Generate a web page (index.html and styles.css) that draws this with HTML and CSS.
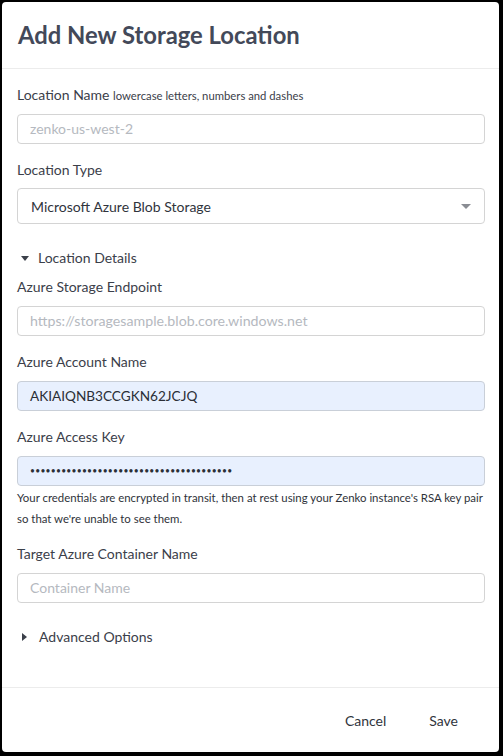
FILE: index.html
```html
<!DOCTYPE html>
<html>
<head>
<meta charset="utf-8">
<link rel="stylesheet" href="styles.css">
</head>
<body>
<div class="dialog">
  <div class="header"><h1 class="title">Add New Storage Location</h1></div>
  <div class="body">
    <div class="field">
      <label class="label">Location Name <span class="hint">lowercase letters, numbers and dashes</span></label>
      <div class="input placeholder">zenko-us-west-2</div>
    </div>
    <div class="field">
      <label class="label">Location Type</label>
      <div class="select"><span>Microsoft Azure Blob Storage</span><span class="caret"></span></div>
    </div>
    <div class="toggle open"><span class="tri-down"></span>Location Details</div>
    <div class="field lower tight">
      <label class="label">Azure Storage Endpoint</label>
      <div class="input placeholder wide">https://storagesample.blob.core.windows.net</div>
    </div>
    <div class="field lower">
      <label class="label">Azure Account Name</label>
      <div class="input filled">AKIAIQNB3CCGKN62JCJQ</div>
    </div>
    <div class="field lower">
      <label class="label">Azure Access Key</label>
      <div class="input filled dots">•••••••••••••••••••••••••••••••••••••••</div>
      <p class="help">Your credentials are encrypted in transit, then at rest using your Zenko instance's RSA key pair so that we're unable to see them.</p>
    </div>
    <div class="field lower">
      <label class="label">Target Azure Container Name</label>
      <div class="input placeholder">Container Name</div>
    </div>
    <div class="toggle closed"><span class="tri-right"></span>Advanced Options</div>
  </div>
  <div class="footer">
    <button class="btn">Cancel</button>
    <button class="btn">Save</button>
  </div>
</div>
</body>
</html>
```
FILE: styles.css
```css
html, body {
  margin: 0;
  padding: 0;
  background: #000;
  width: 503px;
  height: 756px;
  overflow: hidden;
}
body {
  padding: 2px 4px 4px 2px;
  box-sizing: border-box;
  font-family: Lato, "Noto Sans", sans-serif;
  color: #3b404a;
}
.dialog {
  background: #fff;
  border-radius: 4px;
  height: 750px;
  display: flex;
  flex-direction: column;
}
.header {
  height: 67px;
  border-bottom: 1px solid #ececec;
  box-sizing: border-box;
  padding: 0 16px;
  display: flex;
  align-items: center;
}
.title {
  margin: 0;
  font-size: 23.8px;
  font-weight: 700;
  color: #434959;
  padding-bottom: 1px;
}
.body {
  flex: 1;
  padding: 17px 14px 0 15px;
}
.field {
  margin-bottom: 17px;
}
.field.tight {
  margin-top: 11px;
}
.label {
  display: block;
  font-size: 14px;
  line-height: 18px;
  margin-bottom: 9px;
  color: #3b404a;
}
.lower .label {
  margin-bottom: 10px;
}
.hint {
  font-size: 11.3px;
}
.input {
  height: 30px;
  box-sizing: border-box;
  border: 1px solid #d4d4d4;
  border-radius: 4px;
  padding: 0 12px;
  font-size: 14px;
  line-height: 28px;
}
.input.wide {
  font-size: 14.2px;
}
.placeholder {
  color: #b5b9c0;
}
.filled {
  background: #e8f0fe;
  border-color: #c9cfd8;
  color: #2a2e36;
  font-size: 13.6px;
}
.filled.dots {
  font-size: 8.5px;
  letter-spacing: 0.26px;
}
.select {
  height: 36px;
  box-sizing: border-box;
  border: 1px solid #d4d4d4;
  border-radius: 4px;
  padding: 0 13px 0 13px;
  font-size: 14px;
  display: flex;
  align-items: center;
  justify-content: space-between;
  color: #30343c;
}
.caret {
  width: 0;
  height: 0;
  border-left: 5px solid transparent;
  border-right: 5px solid transparent;
  border-top: 5px solid #8a8d93;
}
.toggle {
  font-size: 14px;
  line-height: 18px;
  display: flex;
  align-items: center;
  color: #3b404a;
  padding-left: 4px;
}
.toggle.open {
  margin-top: 25px;
}
.tri-down {
  width: 0;
  height: 0;
  border-left: 4px solid transparent;
  border-right: 4px solid transparent;
  border-top: 5px solid #3b404a;
  margin-right: 9px;
}
.tri-right {
  width: 0;
  height: 0;
  border-top: 4px solid transparent;
  border-bottom: 4px solid transparent;
  border-left: 5px solid #3b404a;
  margin-right: 12px;
  margin-left: 1px;
}
.toggle.closed {
  margin-top: 25px;
}
.help {
  margin: 1px 0 -1px 0;
  font-size: 11.4px;
  line-height: 21px;
  color: #2f333a;
}
.footer {
  height: 64px;
  border-top: 1px solid #ececec;
  display: flex;
  justify-content: flex-end;
  align-items: center;
  padding-right: 41px;
  gap: 43px;
}
.btn {
  background: none;
  border: none;
  font-family: Lato, "Noto Sans", sans-serif;
  font-size: 14px;
  color: #30343c;
  padding: 0;
}
```
